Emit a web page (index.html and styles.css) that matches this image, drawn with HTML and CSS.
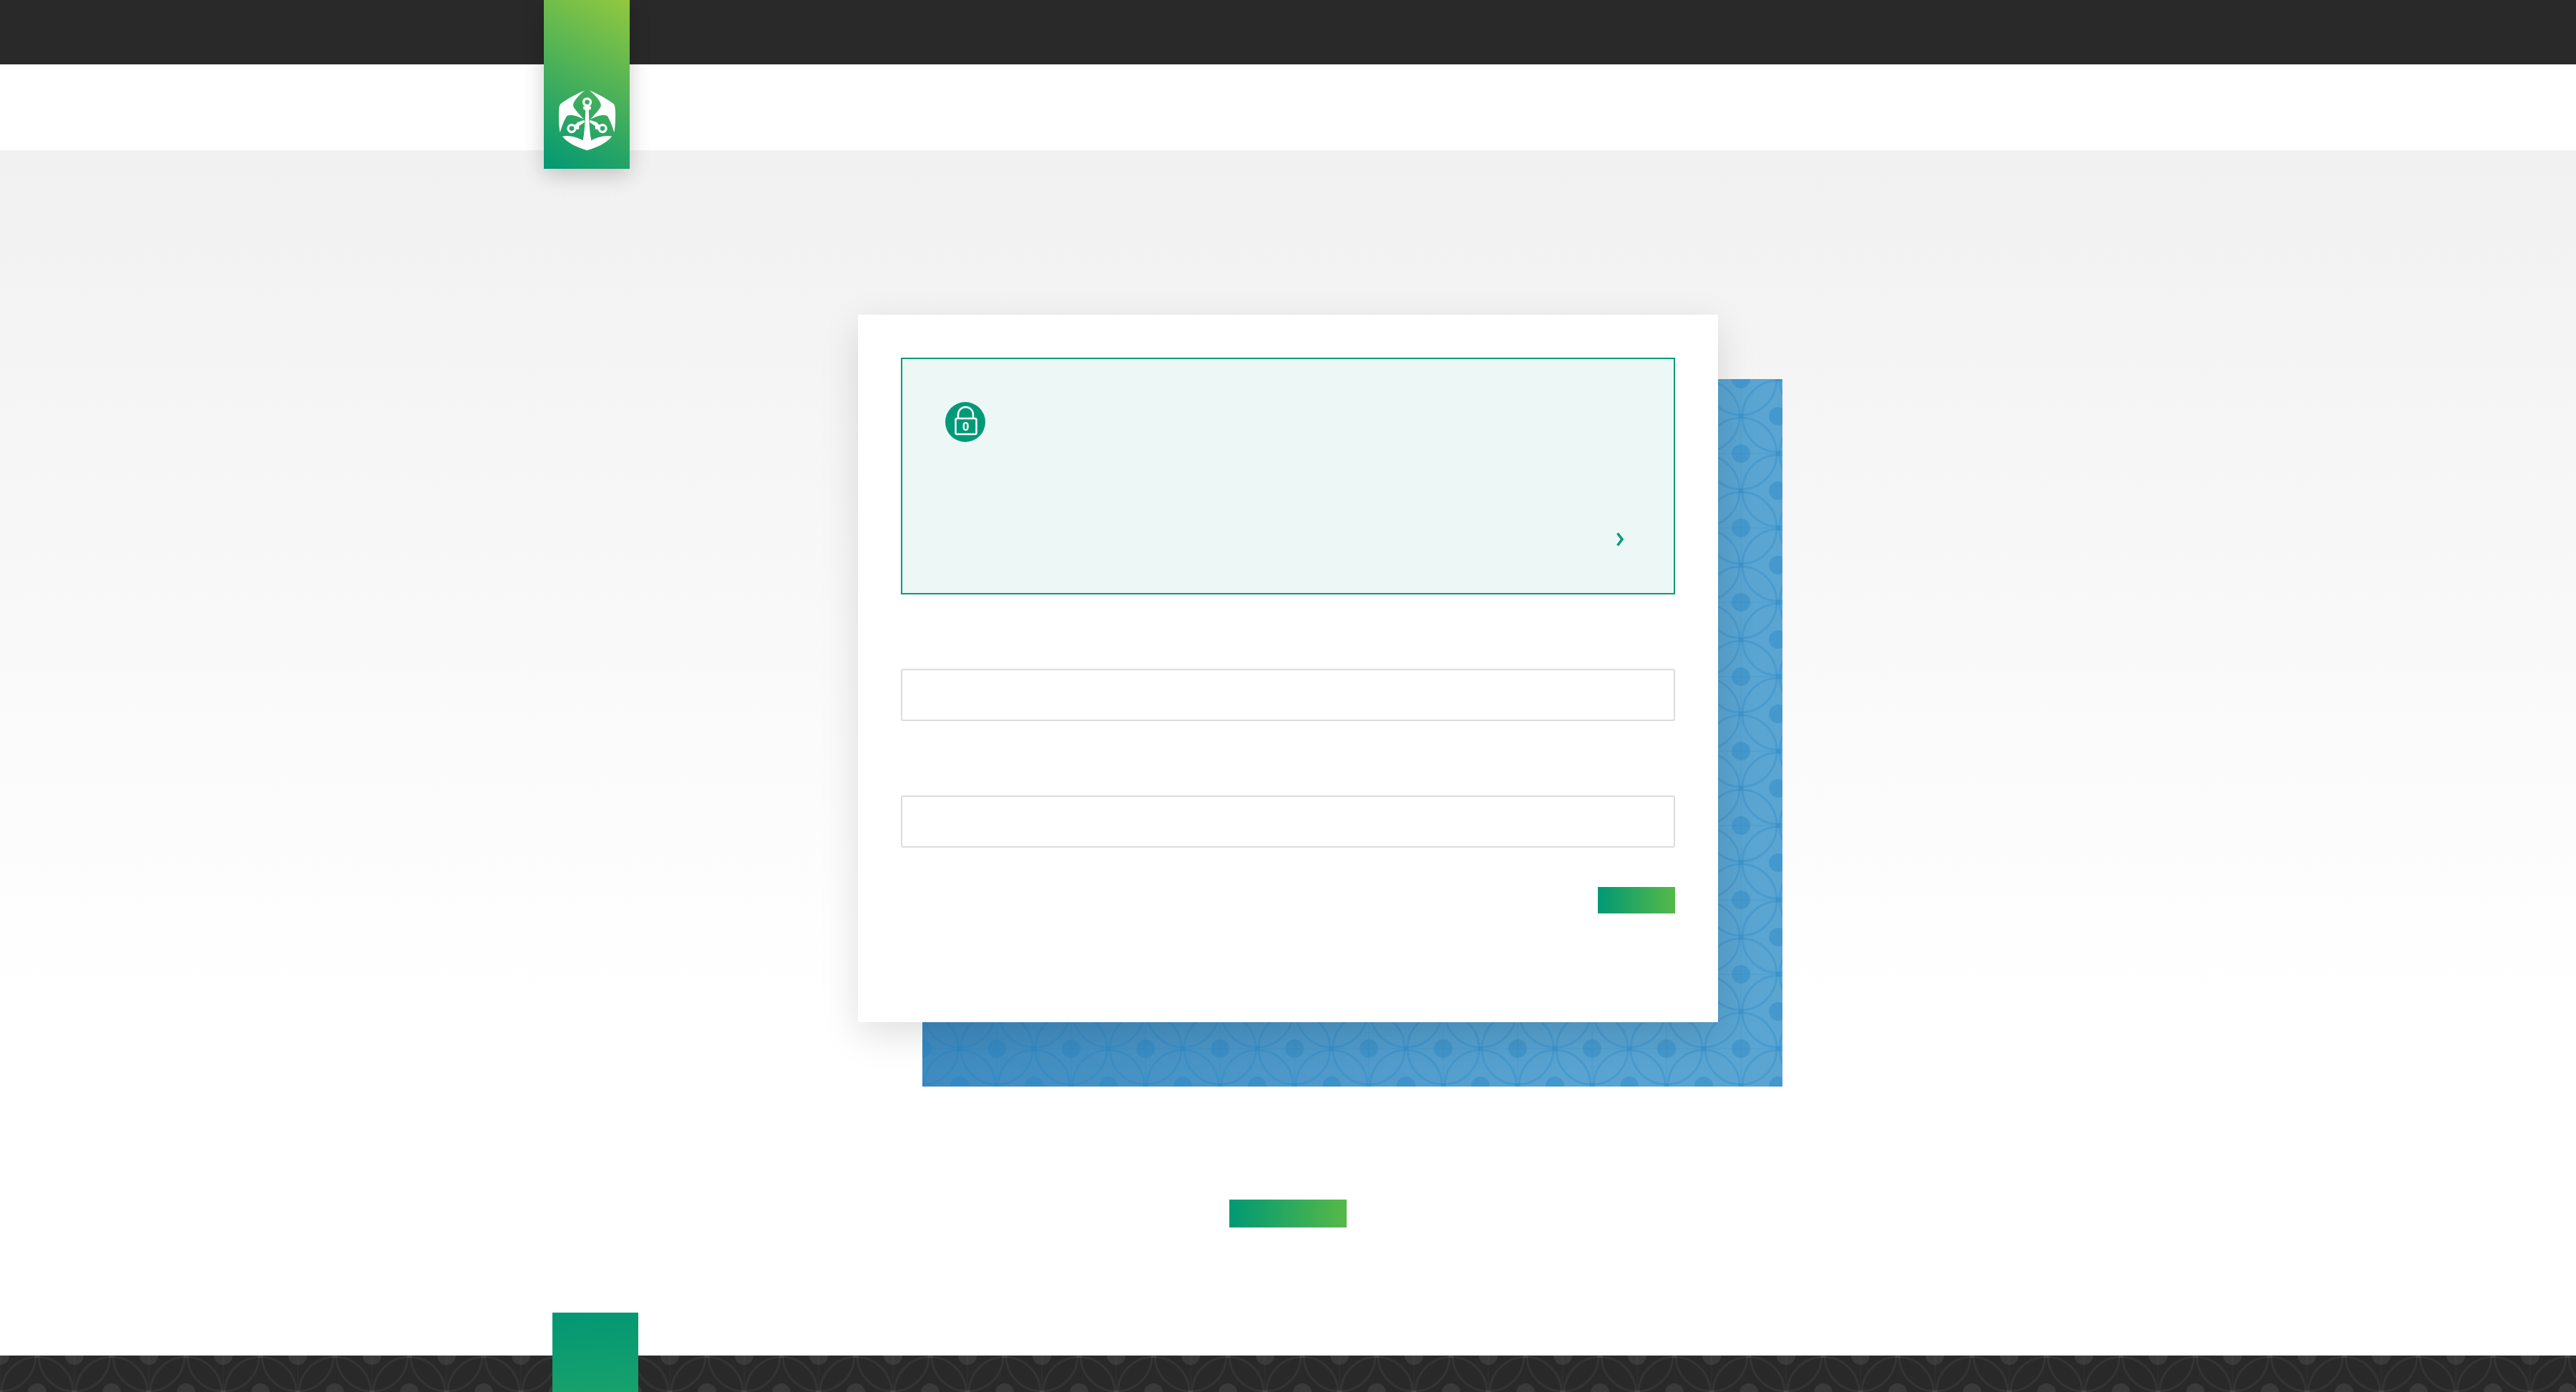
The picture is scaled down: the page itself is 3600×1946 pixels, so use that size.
FILE: index.html
```html
<!DOCTYPE html>
<html lang="en">
<head>
<meta charset="utf-8">
<title>Sign in</title>
<link rel="stylesheet" href="styles.css">
</head>
<body>
<svg class="defs" width="0" height="0" aria-hidden="true">
  <defs>
    <g id="tile-art">
      <path class="pt-line" d="M0 0H104M0 0V104M0 104H104M104 0V104"/>
      <circle class="pt-arc" cx="0" cy="0" r="50"/>
      <circle class="pt-arc" cx="104" cy="0" r="50"/>
      <circle class="pt-arc" cx="0" cy="104" r="50"/>
      <circle class="pt-arc" cx="104" cy="104" r="50"/>
      <circle class="pt-arc" cx="52" cy="52" r="50"/>
      <circle class="pt-dot" cx="0" cy="0" r="13"/>
      <circle class="pt-dot" cx="104" cy="0" r="13"/>
      <circle class="pt-dot" cx="0" cy="104" r="13"/>
      <circle class="pt-dot" cx="104" cy="104" r="13"/>
      <circle class="pt-dot" cx="52" cy="52" r="13"/>
      <rect class="pt-sq" x="49" y="-3" width="6" height="6"/>
      <rect class="pt-sq" x="-3" y="49" width="6" height="6"/>
      <rect class="pt-sq" x="101" y="49" width="6" height="6"/>
      <rect class="pt-sq" x="49" y="101" width="6" height="6"/>
    </g>
    <pattern id="tile" class="tile-blue" width="104" height="104" patternUnits="userSpaceOnUse"><use href="#tile-art"/></pattern>
    <pattern id="tile-dark" class="tile-dark" width="104" height="104" patternUnits="userSpaceOnUse"><use href="#tile-art"/></pattern>
  </defs>
</svg>

<div class="page">
  <div class="topbar"></div>
  <header class="header">
    <a class="logo" href="#" aria-label="Home">
      <svg class="logo-mark" viewBox="118 375 244 258" aria-hidden="true">
        <g class="logo-fill">
          <path d="M231 378C205 388 160 412 130 434C124 440 122 446 121 470C120 500 122 535 126 556C136 522 146 498 156 485C175 478 205 488 227 501C210 482 190 462 182 446C178 424 210 395 231 378Z"/>
          <path d="M249 378C275 388 320 412 350 434C356 440 358 446 359 470C360 500 358 535 354 556C344 522 334 498 324 485C305 478 275 488 253 501C270 482 290 462 298 446C302 424 270 395 249 378Z"/>
          <path d="M136 572C165 566 205 578 222 590C229 560 232 510 233 462L224 458V446H256V458L247 462C248 510 251 560 258 590C275 578 315 566 344 572C325 600 275 622 240 631C205 622 155 600 136 572Z"/>
          <path d="M186 524L194 520L198 514L228 503L229 513L206 528L206 542L196 544L190 538Z"/>
          <path d="M294 524L286 520L282 514L252 503L251 513L274 528L274 542L284 544L290 538Z"/>
        </g>
        <g class="logo-ring">
          <circle cx="240" cy="428" r="15"/>
          <circle cx="175" cy="539" r="15"/>
          <circle cx="305" cy="539" r="15"/>
        </g>
      </svg>
    </a>
  </header>

  <main class="main">
    <div class="stack">
      <div class="backing">
        <svg class="pattern-svg" width="100%" height="100%" aria-hidden="true"><rect width="100%" height="100%" fill="url(#tile)"/></svg>
      </div>
      <section class="card">
        <div class="notice">
          <svg class="lock" viewBox="0 0 56 56" aria-hidden="true">
            <circle class="lock-bg" cx="28" cy="28" r="28"/>
            <path class="lock-line" d="M18 23V17.500A10.500 10.500 0 0 1 39 17.500V23"/>
            <rect class="lock-line" x="14.500" y="23" width="29" height="22" rx="2"/>
            <text class="lock-digit" x="28.500" y="40">0</text>
          </svg>
          <svg class="chevron" viewBox="0 0 10 20" aria-hidden="true"><path d="M1.500 1.500L8 10L1.500 18.500"/></svg>
        </div>
        <div class="field"></div>
        <div class="field"></div>
        <div class="actions"><button class="btn btn-small" type="button"></button></div>
      </section>
    </div>
    <button class="btn btn-wide" type="button"></button>
  </main>

  <footer class="footer">
    <svg class="pattern-svg" width="100%" height="100%" aria-hidden="true"><rect width="100%" height="100%" fill="url(#tile-dark)"/></svg>
    <div class="footer-tab"></div>
  </footer>
</div>
</body>
</html>
```

FILE: styles.css
```css
* { box-sizing: border-box; }
html, body { margin: 0; height: 100%; background: #fff; font-family: "Liberation Sans", Arial, sans-serif; }
.defs { position: absolute; }
.page { height: 1946px; display: flex; flex-direction: column; overflow: hidden; }

.topbar { height: 90px; background: #292929; flex: none; }
.header { height: 120px; background: #fff; flex: none; position: relative; z-index: 2; }

.logo {
  position: absolute; left: 760px; top: -90px;
  width: 120px; height: 236px;
  display: flex; align-items: flex-end; justify-content: center; padding-bottom: 25px;
  background: linear-gradient(30deg, #009874 0%, #92c83f 100%);
  box-shadow: 0 8px 28px rgba(0,0,0,.2);
}
.logo-mark { width: 81px; height: 86px; display: block; }
.logo-fill path { fill: #fff; }
.logo-ring circle { fill: none; stroke: #fff; stroke-width: 10; }

.main {
  flex: 1; display: flex; flex-direction: column; align-items: center;
  padding-top: 230px;
  background: linear-gradient(180deg, #f1f1f1 0, #fff 1190px);
}
.stack { width: 1202px; position: relative; }
.backing {
  position: absolute; left: 90px; top: 90px; width: 100%; height: 100%; z-index: 0;
  background: linear-gradient(90deg, #3f8abf 0, #58a3d1 75%, #5aa5d2 100%);
}
.pattern-svg { display: block; position: absolute; inset: 0; }
.tile-blue {
  --pt-line: rgba(33,130,195,.16);
  --pt-arc: rgba(33,130,195,.28);
  --pt-dot: rgba(33,130,195,.36);
  --pt-sq: rgba(33,130,195,.16);
}
.tile-dark {
  --pt-line: rgba(255,255,255,.03);
  --pt-arc: rgba(255,255,255,.05);
  --pt-dot: rgba(255,255,255,.08);
  --pt-sq: rgba(255,255,255,.04);
}
.pt-line { fill: none; stroke: var(--pt-line); stroke-width: 1.500; }
.pt-arc { fill: none; stroke: var(--pt-arc); stroke-width: 3; }
.pt-dot { fill: var(--pt-dot); stroke: none; }
.pt-sq { fill: var(--pt-sq); stroke: none; }

.card {
  position: relative; z-index: 1; height: 989px; padding: 60px;
  background: #fff;
  box-shadow: 0 16px 50px rgba(0,0,0,.13);
}
.notice {
  position: relative; height: 331px;
  padding: 60px;
  background: #edf7f5; border: 2px solid #009a78;
}
.lock { display: block; width: 56px; height: 56px; }
.lock-bg { fill: #009a78; }
.lock-line { fill: none; stroke: #fff; stroke-width: 2.500; }
.lock-digit { fill: #fff; font: 700 17px "Liberation Sans", Arial, sans-serif; text-anchor: middle; }
.chevron {
  position: absolute; right: 70px; bottom: 65px;
  width: 10px; height: 20px; display: block;
}
.chevron path { fill: none; stroke: #009a78; stroke-width: 3.500; }

.field {
  height: 73px; margin-top: 104px;
  background: #fff; border: 2px solid #dcdcdc; border-radius: 3px;
}

.actions { display: flex; justify-content: flex-end; margin-top: 55px; }
.btn { display: block; padding: 0; border: 0; background: linear-gradient(90deg, #019975 0%, #56b947 100%); }
.btn-small { width: 108px; height: 37px; }
.btn-wide { width: 164px; height: 39px; margin-top: 248px; }

.footer { height: 51px; flex: none; background: #292929; position: relative; z-index: 2; }
.footer-tab {
  position: absolute; left: 772px; bottom: 0; width: 120px; height: 111px;
  background: linear-gradient(175deg, #039774 0%, #18a16c 100%);
}
```
